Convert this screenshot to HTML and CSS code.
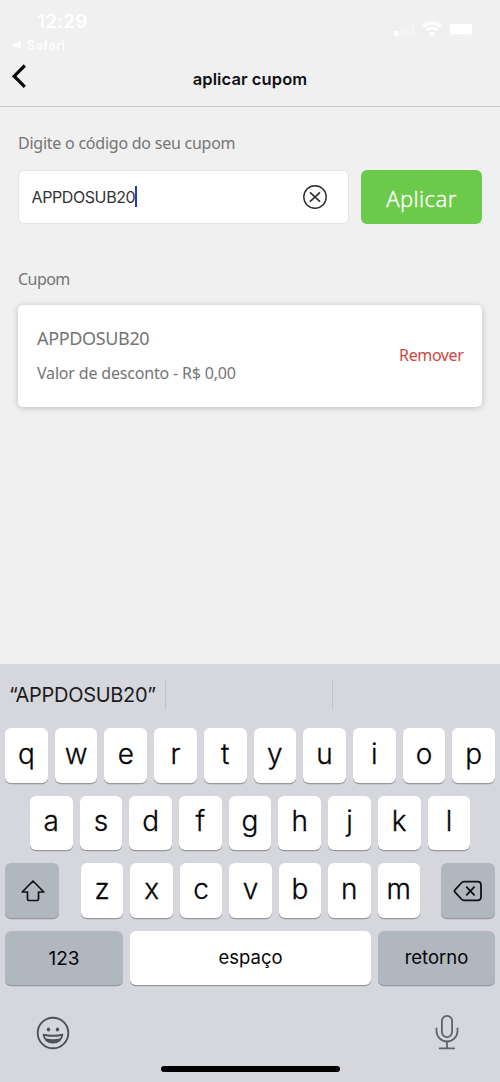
FILE: index.html
```html
<!DOCTYPE html>
<html lang="pt-BR">
<head>
<meta charset="utf-8">
<title>aplicar cupom</title>
<link rel="stylesheet" href="styles.css">
</head>
<body>
<div class="screen">
  <header class="top">
    <div class="status">
      <div class="status-left">
        <div class="clock">12:29</div>
        <div class="return-app"><svg width="9" height="8" viewBox="0 0 9 8"><path d="M9 0v8L0 4z" fill="#fff"/></svg><span>Safari</span></div>
      </div>
      <svg class="status-icons" width="90" height="18" viewBox="0 0 90 18">
        <g fill="#fff">
          <rect x="4" y="11" width="4.500" height="5" rx="1"/>
          <g opacity=".2"><rect x="10" y="9" width="4" height="7" rx="1"/><rect x="15.500" y="6" width="4" height="10" rx="1"/><rect x="21" y="3" width="4" height="13" rx="1"/></g>
          <rect x="60" y="4" width="22" height="10.500" rx="2"/>
        </g>
        <rect x="58" y="2" width="26" height="14.500" rx="4" fill="none" stroke="#fff" opacity=".2"/>
        <g fill="none" stroke="#fff" stroke-width="2.800"><path d="M33.200 6.500a13 13 0 0 1 17.600 0M36.500 10.200a8 8 0 0 1 11 0"/></g>
        <path d="M39.200 13.300a4 4 0 0 1 5.600 0L42 16.300z" fill="#fff"/>
      </svg>
    </div>
    <div class="nav">
      <svg class="back" width="16" height="26" viewBox="0 0 16 26"><path d="M13.800 2.500L3.200 13.200 13.800 23.800" fill="none" stroke="#050505" stroke-width="3.200"/></svg>
      <h1 class="title">aplicar cupom</h1>
    </div>
  </header>

  <main class="content">
    <label class="label enter-label">Digite o código do seu cupom</label>
    <div class="form">
      <div class="field">
        <span class="value">APPDOSUB20</span><span class="caret"></span>
        <svg class="clear" width="26" height="26" viewBox="0 0 26 26" fill="none" stroke="#2b2b2e"><circle cx="13" cy="13" r="11.200" stroke-width="1.400"/><path d="M8 8.300l10 9.400M18 8.300L8 17.700" stroke-width="1.600"/></svg>
      </div>
      <button class="apply">Aplicar</button>
    </div>
    <div class="label coupon-label">Cupom</div>
    <section class="card">
      <div>
        <div class="code">APPDOSUB20</div>
        <div class="discount">Valor de desconto - R$ 0,00</div>
      </div>
      <div class="remove">Remover</div>
    </section>
  </main>

  <section class="keyboard">
    <div class="suggestions"><div class="suggestion">“APPDOSUB20”</div><div class="suggestion"></div><div class="suggestion"></div></div>
    <div class="keys">
      <div class="row"><div class="key">q</div><div class="key">w</div><div class="key">e</div><div class="key">r</div><div class="key">t</div><div class="key">y</div><div class="key">u</div><div class="key">i</div><div class="key">o</div><div class="key">p</div></div>
      <div class="row row-home"><div class="key">a</div><div class="key">s</div><div class="key">d</div><div class="key">f</div><div class="key">g</div><div class="key">h</div><div class="key">j</div><div class="key">k</div><div class="key">l</div></div>
      <div class="row">
        <div class="key dark shift"><svg width="26" height="24" viewBox="0 0 26 24"><path d="M13 2L2.200 13H7.500V20.200Q7.500 21.500 8.800 21.500H17.200Q18.500 21.500 18.500 20.200V13H23.800z" fill="none" stroke="#111" stroke-width="1.700" stroke-linejoin="round"/></svg></div>
        <div class="key">z</div><div class="key">x</div><div class="key">c</div><div class="key">v</div><div class="key">b</div><div class="key">n</div><div class="key">m</div>
        <div class="key dark delete"><svg width="30" height="22" viewBox="0 0 30 22" fill="none" stroke="#111" stroke-width="1.800" stroke-linecap="round" stroke-linejoin="round"><path d="M11 1.700H24.500Q28 1.700 28 5.200V16.800Q28 20.300 24.500 20.300H11Q9.500 20.300 8.300 19L2 12.200Q.9 11 2 9.800L8.300 3Q9.500 1.700 11 1.700z"/><path d="M13.700 7.200l7.400 7.600M21.100 7.200l-7.400 7.600"/></svg></div>
      </div>
      <div class="row bottom-row"><div class="key dark number">123</div><div class="key">espaço</div><div class="key dark">retorno</div></div>
    </div>
    <div class="tools">
      <svg width="34" height="34" viewBox="0 0 34 34"><circle cx="17" cy="17" r="15.300" fill="none" stroke="#505158" stroke-width="1.900"/><ellipse cx="12.500" cy="13.500" rx="1.700" ry="2" fill="#505158"/><ellipse cx="21.500" cy="13.500" rx="1.700" ry="2" fill="#505158"/><path d="M7.300 18.400Q17 20.400 26.700 18.400Q25.600 27 17 27T7.300 18.400z" fill="#505158" stroke="#505158" stroke-width="1.200" stroke-linejoin="round"/><path d="M8.800 20Q17 21.700 25.200 20L24.300 22.300Q17 24.300 9.700 22.300z" fill="#d5d7dd"/></svg>
      <svg class="mic" width="26" height="38" viewBox="0 0 26 38" fill="none" stroke="#606169" stroke-width="1.800" stroke-linecap="round"><rect x="7.900" y="2.900" width="10.200" height="21.200" rx="5.100"/><path d="M2.500 15.500V18a10.500 10.500 0 0 0 21 0V15.500M13 28.500V35M5.700 35.300H20.300"/></svg>
    </div>
    <div class="home-indicator"></div>
  </section>
</div>
</body>
</html>
```
FILE: styles.css
```css
* { box-sizing: border-box; }
body { margin: 0; font-family: Inter, "Liberation Sans", sans-serif; }
.screen { width: 500px; height: 1082px; display: flex; flex-direction: column; background: #f0f0f0; overflow: hidden; }
.top { height: 107px; flex: none; border-bottom: 1px solid #c5c5c5; }
.status { height: 54px; display: flex; justify-content: space-between; padding: 12px 20px 0 12px; }
.clock { height: 20px; margin-left: 25px; line-height: 20px; font-size: 19px; font-weight: 600; letter-spacing: .1px; color: #fff; }
.return-app { display: flex; align-items: center; gap: 6px; height: 14px; margin-top: 6px; font-size: 12.500px; font-weight: 500; letter-spacing: .6px; color: #fff; }
.status-icons { margin-top: 8px; }
.nav { height: 52px; display: grid; grid-template-columns: 50px 1fr 50px; }
.back { margin: 9px 0 0 11px; }
.title { margin: 15px 0 0; text-align: center; line-height: 20px; font-size: 16.500px; font-weight: 600; letter-spacing: .1px; color: #111; }
.content { flex: 1; padding: 24px 18px 0; }
.label { display: block; height: 24px; line-height: 24px; font-family: "Noto Sans", sans-serif; font-size: 16px; letter-spacing: -.24px; color: #757575; white-space: nowrap; }
.form { display: flex; gap: 12px; margin-top: 14px; height: 55px; }
.field { width: 331px; height: 54px; margin-top: 1px; display: flex; align-items: center; padding: 0 20px 1px 12.500px; background: #fff; border: 1px solid #e4e4e4; border-radius: 6px; }
.value { font-size: 16px; letter-spacing: -.4px; color: #333; }
.caret { width: 2.500px; height: 21px; margin-left: -.5px; background: #2b35bd; }
.clear { margin-left: auto; }
.apply { width: 121px; height: 54.500px; margin-top: .5px; padding: 3px 0 0; border: 0; border-radius: 6px; background: #6bca49; color: #fff; font-family: "Noto Sans", sans-serif; font-size: 22px; font-weight: 300; letter-spacing: .4px; -webkit-text-stroke: .3px #fff; }
.coupon-label { margin-top: 43px; letter-spacing: -.55px; }
.card { height: 102px; margin-top: 14px; display: flex; justify-content: space-between; padding: 20px 18.500px 0 19px; border-radius: 5px; background: #fff; box-shadow: 0 1px 6px rgba(0,0,0,.22); font-family: "Noto Sans", sans-serif; color: #757575; }
.code { line-height: 26px; font-size: 18px; letter-spacing: -.35px; }
.discount { margin-top: 10px; line-height: 24px; font-size: 16px; letter-spacing: -.18px; }
.remove { margin-top: 18px; line-height: 24px; font-size: 16px; letter-spacing: -.38px; color: #c94842; }
.keyboard { height: 418px; flex: none; background: #d5d7dd; display: flex; flex-direction: column; }
.suggestions { height: 64px; display: grid; grid-template-columns: 166px 167px 167px; padding-top: 16px; }
.suggestion { height: 30px; line-height: 31px; padding-left: 9px; border-right: 1px solid #c1c3ca; font-size: 20px; letter-spacing: -.3px; color: #1b1c20; white-space: nowrap; }
.suggestion:last-child { border-right: 0; }
.keys { display: grid; grid-auto-rows: 54.500px; row-gap: 13.100px; padding: 0 5px; }
.row { display: flex; gap: 7px; }
.row-home { padding: 0 24.800px; }
.key { flex: 1; display: flex; align-items: center; justify-content: center; padding-bottom: 3px; border-radius: 6px; background: #fff; box-shadow: 0 1.300px 0 #96989c; font-size: 28px; font-weight: 300; -webkit-text-stroke: .3px #050505; color: #050505; }
.dark { background: #b1b7bf; }
.shift, .delete { flex: 0 0 54px; padding: 2px 0 0; }
.shift { margin-right: 15px; padding-left: 1px; }
.delete { margin-left: 14px; }
.bottom-row { display: grid; grid-template-columns: 118px 241px 117px; }
.bottom-row .key { padding-bottom: 2px; font-size: 18.500px; font-weight: 400; -webkit-text-stroke: 0; }
.bottom-row .number { padding-bottom: 0; font-size: 19px; }
.tools { display: flex; justify-content: space-between; align-items: center; padding: 0 40px 0 36px; margin-top: 28px; height: 40px; }
.mic { margin-bottom: 2px; }
.home-indicator { width: 179px; height: 6px; margin: 13px auto 0; border-radius: 3px; background: #000; }
```
